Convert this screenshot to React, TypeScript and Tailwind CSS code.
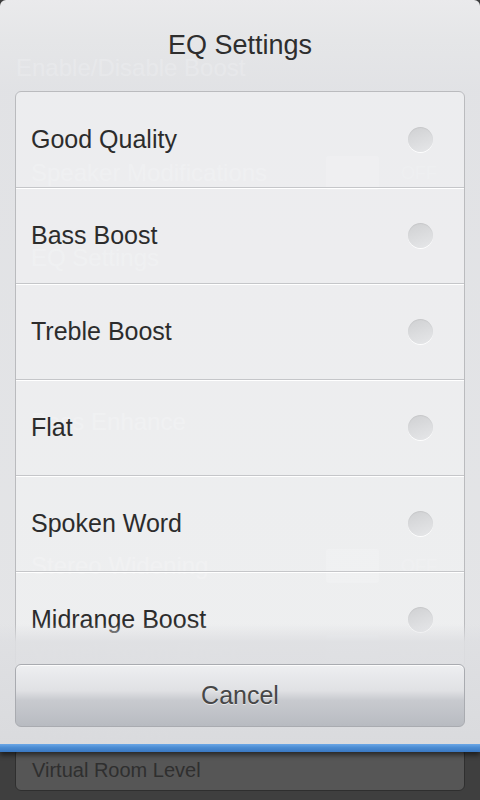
import { useState } from "react";

const presets = ["Good Quality", "Bass Boost", "Treble Boost", "Flat", "Spoken Word", "Midrange Boost"];

type GhostRow = { label: string; gap: string; toggle?: "off" | "on" };

// settings page that sits behind the dialog
const ghostRows: GhostRow[] = [
  { label: "Speaker Modifications", gap: "mt-[69px]", toggle: "off" },
  { label: "EQ Settings", gap: "mt-[49px]" },
  { label: "Bass Enhance", gap: "mt-[128px]" },
  { label: "Stereo Widening", gap: "mt-[108px]", toggle: "off" },
  { label: "Virtual Room Effect", gap: "mt-[50px]", toggle: "on" },
  { label: "Virtual Room", gap: "mt-[48px]" },
];

function Radio({ checked }: { checked: boolean }) {
  return (
    <span className="flex h-[25px] w-[25px] items-center justify-center rounded-full bg-[linear-gradient(160deg,#cfd0d2_0%,#dcdddf_55%,#e6e7e9_100%)] shadow-[0_1px_0_rgba(255,255,255,0.9),inset_0_1px_1px_rgba(0,0,0,0.06)]">
      {checked && <span className="h-[11px] w-[11px] rounded-full bg-[#3b82d6]" />}
    </span>
  );
}

export default function App() {
  const [selected, setSelected] = useState<string | null>(null);

  return (
    <div className="relative h-[800px] w-[480px] overflow-hidden bg-[#3f3f3f] font-['Liberation_Sans',Arial,sans-serif]">
      <div className="flex flex-col pt-[50px]">
        <div className="h-9 px-4 text-[24px] leading-9 text-white/45">Enable/Disable Boost</div>
        {ghostRows.map((row) => (
          <div key={row.label} className={`flex h-9 items-center pl-[31px] pr-[35px] ${row.gap}`}>
            <span className="text-[24px] leading-9 text-white/45">{row.label}</span>
            {row.toggle && (
              <div className="ml-auto flex items-center gap-[22px]">
                <span
                  className={`h-[34px] w-[53px] rounded-[3px] ${
                    row.toggle === "on" ? "bg-[#7f9fcc]/70" : "bg-white/35"
                  }`}
                />
                <span className="w-[44px] text-[18px] text-white/25">{row.toggle === "on" ? "ON" : "OFF"}</span>
              </div>
            )}
          </div>
        ))}
        <div className="mx-[15px] mt-[-6px] flex h-[43px] items-center rounded-[6px] border border-[#2f2f2f] bg-[#565656] pl-4">
          <span className="text-[20px] text-[#2f2f2f]">Virtual Room Level</span>
        </div>
      </div>

      <div className="absolute inset-x-0 top-0 flex h-[752px] flex-col overflow-hidden rounded-t-[6px] bg-[linear-gradient(to_bottom,rgba(243,243,245,0.95)_0%,rgba(238,239,241,0.95)_40px,rgba(234,235,238,0.95)_91px,rgba(237,238,240,0.95)_100%)] shadow-[0_3px_5px_rgba(0,0,0,0.55)]">
        <div className="flex h-[91px] shrink-0 items-center justify-center text-[27px] text-[#2e2e2e]">EQ Settings</div>

        <div className="min-h-0 flex-1 overflow-hidden px-[15px]">
          <div className="rounded-[6px] border border-[#babbbe] bg-[rgba(255,255,255,0.38)]">
            {presets.map((name, i) => (
              <button
                key={name}
                type="button"
                onClick={() => setSelected(name)}
                className={`flex w-full items-center justify-between pl-[15px] pr-[31px] text-left ${
                  i === 0 ? "h-[95px]" : "h-[96px] border-t border-[#c5c6c9] shadow-[inset_0_1px_0_#ffffff]"
                }`}
              >
                <span className="text-[25px] text-[#2c2c2c]">{name}</span>
                <Radio checked={selected === name} />
              </button>
            ))}
          </div>
        </div>

        <div className="h-[8px] shrink-0 bg-[linear-gradient(to_bottom,#6aa6e6_0%,#4a8bd2_45%,#3a78c2_100%)]" />

        <div className="absolute inset-x-0 bottom-[8px] flex h-[120px] flex-col justify-end bg-[linear-gradient(to_bottom,rgba(222,223,226,0)_0px,rgba(222,223,226,0.9)_18px,rgba(217,218,221,0.95)_100%)] px-[15px] pb-[17px]">
          <button
            type="button"
            className="flex h-[63px] w-full items-center justify-center rounded-[6px] border border-[#a9abb0] bg-[linear-gradient(to_bottom,#eeeff1_0%,#e0e1e4_42%,#c8cacf_58%,#b8bbc1_100%)] text-[25px] text-[#474747] shadow-[inset_0_1px_0_rgba(255,255,255,0.8)] [text-shadow:0_1px_0_rgba(255,255,255,0.6)]"
          >
            Cancel
          </button>
        </div>
      </div>
    </div>
  );
}
